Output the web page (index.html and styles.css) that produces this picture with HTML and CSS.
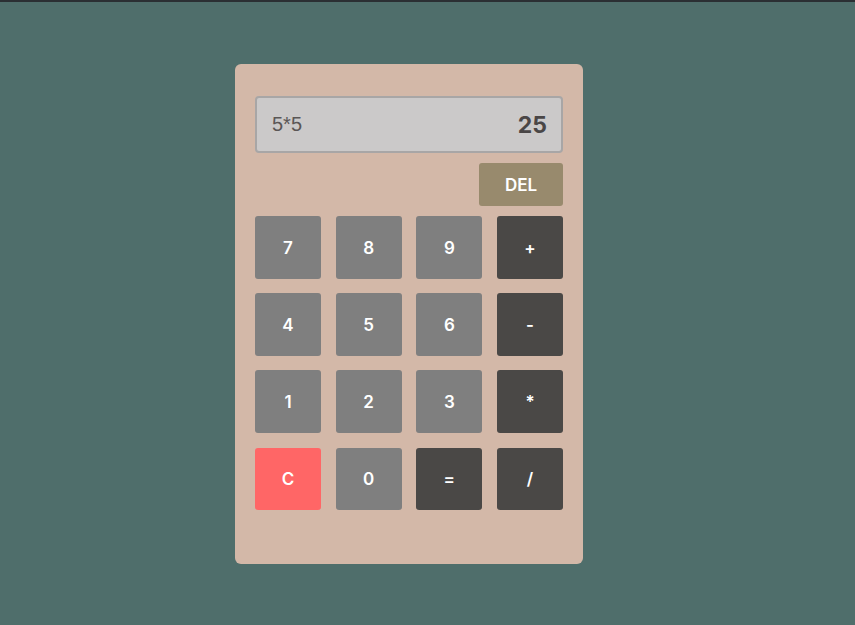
FILE: index.html
```html
<!DOCTYPE html>
<html>
<head>
<meta charset="utf-8">
<link rel="stylesheet" href="styles.css">
</head>
<body>
<div class="topbar"></div>
<main class="stage">
  <div class="calc">
    <div class="display">
      <span class="expr">5*5</span>
      <span class="result">25</span>
    </div>
    <div class="delrow"><button class="btn del">DEL</button></div>
    <div class="keys">
      <button class="btn num">7</button>
      <button class="btn num">8</button>
      <button class="btn num">9</button>
      <button class="btn op">+</button>
      <button class="btn num">4</button>
      <button class="btn num">5</button>
      <button class="btn num">6</button>
      <button class="btn op">-</button>
      <button class="btn num">1</button>
      <button class="btn num">2</button>
      <button class="btn num">3</button>
      <button class="btn op">*</button>
      <button class="btn clear">C</button>
      <button class="btn num">0</button>
      <button class="btn op">=</button>
      <button class="btn op">/</button>
    </div>
  </div>
</main>
</body>
</html>
```
FILE: styles.css
```css
* { box-sizing: border-box; }
html, body { margin: 0; padding: 0; }
body {
  background: #4f6e6b;
  width: 855px;
  height: 625px;
  overflow: hidden;
  font-family: Inter, "Noto Sans", sans-serif;
}
.topbar { height: 2px; background: #2b2f33; }
.stage {
  padding-top: 62px;
  padding-left: 235px;
}
.calc {
  width: 348px;
  height: 500px;
  background: #d3b8a8;
  border-radius: 6px;
  padding: 32px 20px 0 20px;
}
.display {
  height: 57px;
  background: #cbc9c9;
  border: 2px solid #a8a6a6;
  border-radius: 4px;
  display: flex;
  justify-content: space-between;
  align-items: center;
  padding: 0 14px 0 15px;
}
.expr {
  font-family: "Liberation Sans", Arial, sans-serif;
  font-size: 20px;
  color: #5a5656;
}
.result {
  font-family: Inter, "Noto Sans", sans-serif;
  font-size: 23px;
  font-weight: 700;
  color: #4a4646;
}
.delrow {
  display: flex;
  justify-content: flex-end;
  margin-top: 10px;
}
.btn {
  border: none;
  color: #fff;
  font-family: Inter, "Noto Sans", sans-serif;
  font-weight: 600;
  font-size: 17px;
  border-radius: 3px;
  padding: 0;
}
.del {
  width: 84px;
  height: 43px;
  background: #988a6d;
}
.keys {
  margin-top: 10px;
  display: grid;
  grid-template-columns: repeat(4, 66px);
  justify-content: space-between;
  grid-template-rows: repeat(4, 63px);
  align-content: start;
  row-gap: 14px;
}
.keys .btn:nth-child(n+13) { margin-top: 1px; }
.num { background: #7f7f7f; }
.op { background: #4a4846; }
.clear { background: #ff6666; }
```
